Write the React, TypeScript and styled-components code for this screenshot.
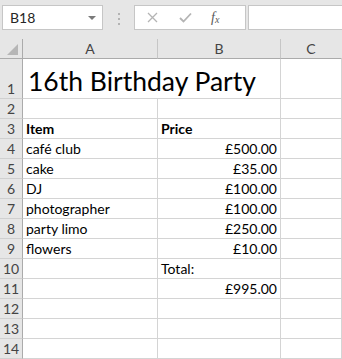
import { FC } from "react";
import styled, { createGlobalStyle } from "styled-components";

const GlobalStyle = createGlobalStyle`
  body {
    margin: 0;
    background: #ffffff;
    font-family: "Lato", "Noto Sans", sans-serif;
    overflow: hidden;
  }
`;

const Window = styled.div`
  width: 342px;
  height: 359px;
  overflow: hidden;
  background: #e6e6e6;
`;

const FormulaBar = styled.div`
  display: flex;
  align-items: flex-start;
  height: 39px;
  padding: 5px 0 0 2px;
  box-sizing: border-box;
`;

const NameBox = styled.div`
  display: flex;
  align-items: center;
  justify-content: space-between;
  width: 101px;
  height: 25px;
  box-sizing: border-box;
  padding: 0 6px 0 7px;
  background: #ffffff;
  border: 1px solid #c6c6c6;
  font-size: 14px;
  color: #262626;
`;

const DropArrow = styled.span`
  width: 0;
  height: 0;
  border-left: 4px solid transparent;
  border-right: 4px solid transparent;
  border-top: 4px solid #7a7a7a;
  margin-top: 1px;
`;

const Grip = styled.div`
  display: flex;
  flex-direction: column;
  gap: 3px;
  margin: 8px 14px 0 15px;
  span {
    width: 2px;
    height: 2px;
    background: #b3b3b3;
  }
`;

const ButtonBox = styled.div`
  display: flex;
  align-items: center;
  width: 112px;
  height: 25px;
  box-sizing: border-box;
  background: #ffffff;
  border: 1px solid #c6c6c6;
  padding-left: 12px;
  gap: 21px;
`;

const Fx = styled.i`
  font-family: "Liberation Serif", serif;
  font-size: 14px;
  color: #5a5a5a;
  margin-left: -2px;
  sub {
    font-size: 10px;
    vertical-align: -1px;
  }
`;

const FormulaInput = styled.div`
  flex: 1;
  height: 25px;
  margin-left: 2px;
  box-sizing: border-box;
  background: #ffffff;
  border: 1px solid #c6c6c6;
  border-right: none;
`;

const Grid = styled.div`
  display: grid;
  grid-template-columns: 23px 135px 123px 1fr;
  grid-template-rows: 20px 40px;
  grid-auto-rows: 20px;
  background: #ffffff;
`;

const Corner = styled.div`
  position: relative;
  background: #e6e6e6;
  border-right: 1px solid #ababab;
  border-bottom: 1px solid #ababab;
  svg {
    position: absolute;
    right: 4px;
    bottom: 3px;
  }
`;

const ColHead = styled.div<{ $last?: boolean }>`
  display: flex;
  align-items: center;
  justify-content: center;
  background: #e6e6e6;
  border-right: 1px solid ${(p) => (p.$last ? "transparent" : "#c6c6c6")};
  border-bottom: 1px solid #ababab;
  font-size: 14px;
  color: #444444;
`;

const RowHead = styled.div`
  display: flex;
  align-items: flex-end;
  justify-content: center;
  padding-bottom: 1px;
  box-sizing: border-box;
  background: #e6e6e6;
  border-right: 1px solid #ababab;
  border-bottom: 1px solid #d0d0d0;
  font-size: 14px;
  line-height: 16px;
  color: #444444;
`;

const Cell = styled.div<{ $right?: boolean; $bold?: boolean; $span?: number }>`
  display: flex;
  align-items: flex-end;
  justify-content: ${(p) => (p.$right ? "flex-end" : "flex-start")};
  grid-column: span ${(p) => p.$span ?? 1};
  box-sizing: border-box;
  padding: 0 3px 1px 3px;
  border-right: 1px solid #d4d4d4;
  border-bottom: 1px solid #d4d4d4;
  font-size: 14px;
  line-height: 16px;
  font-weight: ${(p) => (p.$bold ? 700 : 400)};
  color: #000000;
  white-space: nowrap;
`;

const Title = styled.span`
  font-size: 26.5px;
  line-height: 30px;
  padding-left: 2px;
  margin-bottom: 1px;
`;

const CrossIcon: FC = () => (
  <svg width="11" height="11" viewBox="0 0 11 11">
    <path d="M1 1 L10 10 M10 1 L1 10" stroke="#b4b4b4" strokeWidth="1.3" fill="none" />
  </svg>
);

const CheckIcon: FC = () => (
  <svg width="13" height="11" viewBox="0 0 13 11">
    <path d="M1 6 L4.5 9.5 L12 1.5" stroke="#b4b4b4" strokeWidth="1.8" fill="none" />
  </svg>
);

interface IRow {
  item: string;
  price: string;
  bold?: boolean;
  priceLeft?: boolean;
}

const rows: IRow[] = [
  { item: "", price: "" },
  { item: "Item", price: "Price", bold: true, priceLeft: true },
  { item: "café club", price: "£500.00" },
  { item: "cake", price: "£35.00" },
  { item: "DJ", price: "£100.00" },
  { item: "photographer", price: "£100.00" },
  { item: "party limo", price: "£250.00" },
  { item: "flowers", price: "£10.00" },
  { item: "", price: "Total:", priceLeft: true },
  { item: "", price: "£995.00" },
  { item: "", price: "" },
  { item: "", price: "" },
  { item: "", price: "" },
];

const App: FC = () => {
  return (
    <>
      <GlobalStyle />
      <Window>
        <FormulaBar>
          <NameBox>
            B18
            <DropArrow />
          </NameBox>
          <Grip>
            <span />
            <span />
            <span />
          </Grip>
          <ButtonBox>
            <CrossIcon />
            <CheckIcon />
            <Fx>
              f<sub>x</sub>
            </Fx>
          </ButtonBox>
          <FormulaInput />
        </FormulaBar>
        <Grid>
          <Corner>
            <svg width="11" height="11" viewBox="0 0 11 11">
              <path d="M11 0 L11 11 L0 11 Z" fill="#b6b6b6" />
            </svg>
          </Corner>
          <ColHead>A</ColHead>
          <ColHead>B</ColHead>
          <ColHead $last>C</ColHead>

          <RowHead>1</RowHead>
          <Cell $span={2}>
            <Title>16th Birthday Party</Title>
          </Cell>
          <Cell />

          {rows.map((row, i) => (
            <div key={i} style={{ display: "contents" }}>
              <RowHead>{i + 2}</RowHead>
              <Cell $bold={row.bold}>{row.item}</Cell>
              <Cell $bold={row.bold} $right={!row.priceLeft}>
                {row.price}
              </Cell>
              <Cell />
            </div>
          ))}
        </Grid>
      </Window>
    </>
  );
};

export default App;
